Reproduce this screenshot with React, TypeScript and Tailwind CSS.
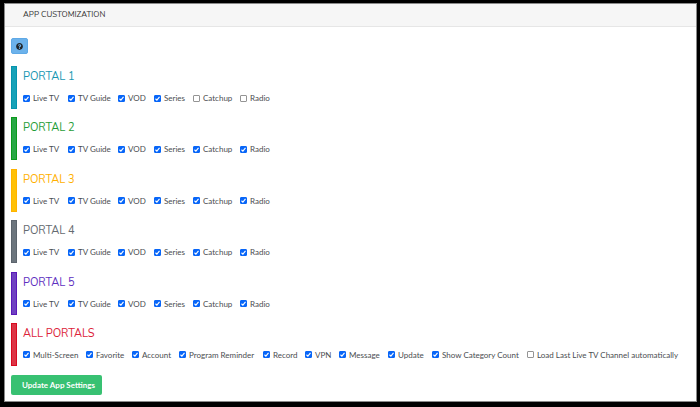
import React from "react";
import { FaQuestionCircle } from "react-icons/fa";

/* ============================= */
/* Type Definition */
/* ============================= */

type Portal = {
  name: string;
  text: string;
  bar: string;
  columns: string;
  options: string[];
  off?: string[];
};

/* ============================= */
/* Data */
/* ============================= */

const portalColumns = "grid-cols-[45px_50px_36px_39px_47px_auto]";
const portalOptions = [
  "Live TV",
  "TV Guide",
  "VOD",
  "Series",
  "Catchup",
  "Radio",
];

const portals: Portal[] = [
  {
    name: "PORTAL 1",
    text: "text-[#1797b2]",
    bar: "bg-[#17a2b8] border-[#0794ae]",
    columns: portalColumns,
    options: portalOptions,
    off: ["Catchup", "Radio"],
  },
  {
    name: "PORTAL 2",
    text: "text-[#1f9d37]",
    bar: "bg-[#28a745] border-[#0a9a1c]",
    columns: portalColumns,
    options: portalOptions,
  },
  {
    name: "PORTAL 3",
    text: "text-[#ffb000]",
    bar: "bg-[#ffc107] border-[#ffb300]",
    columns: portalColumns,
    options: portalOptions,
  },
  {
    name: "PORTAL 4",
    text: "text-[#646a70]",
    bar: "bg-[#6c757d] border-[#5c646d]",
    columns: portalColumns,
    options: portalOptions,
  },
  {
    name: "PORTAL 5",
    text: "text-[#5e2fc0]",
    bar: "bg-[#6f42c1] border-[#5a18b8]",
    columns: portalColumns,
    options: portalOptions,
  },
  {
    name: "ALL PORTALS",
    text: "text-[#dc2339]",
    bar: "bg-[#dc3545] border-[#d80a20]",
    columns: "grid-cols-[63px_46px_47px_84px_42px_34px_49px_44px_95px_auto]",
    options: [
      "Multi-Screen",
      "Favorite",
      "Account",
      "Program Reminder",
      "Record",
      "VPN",
      "Message",
      "Update",
      "Show Category Count",
      "Load Last Live TV Channel automatically",
    ],
    off: ["Load Last Live TV Channel automatically"],
  },
];

/* ============================= */
/* Option Checkbox */
/* ============================= */

const Option: React.FC<{ label: string; checked: boolean }> = ({
  label,
  checked,
}) => {
  return (
    <label className="flex items-center gap-[3px] text-[8px] leading-[12px] whitespace-nowrap">
      <span className="grid h-[7px] w-[7px] shrink-0">
        <input
          type="checkbox"
          defaultChecked={checked}
          className="peer col-start-1 row-start-1 h-[7px] w-[7px] appearance-none rounded-[1px] border border-[#949494] bg-white checked:border-[#0866f8] checked:bg-[#0866f8]"
        />
        {/* Tick mark */}
        <svg
          viewBox="0 0 14 14"
          className="pointer-events-none invisible col-start-1 row-start-1 h-[7px] w-[7px] peer-checked:visible"
        >
          <path
            d="M3 7.5 L5.8 10.3 L11 3.7"
            fill="none"
            stroke="white"
            strokeWidth="2.2"
          />
        </svg>
      </span>
      {label}
    </label>
  );
};

/* ============================= */
/* Portal Section */
/* ============================= */

const PortalSection: React.FC<{ portal: Portal }> = ({ portal }) => {
  return (
    <section className="flex">
      <div className={`w-[6px] shrink-0 border ${portal.bar}`} />
      <div className="pt-[3px] pb-[5px] pl-[6px]">
        <h2
          className={`font-['Nunito','Lato',sans-serif] text-[11px] leading-[15px] ${portal.text}`}
        >
          {portal.name}
        </h2>
        <div className={`mt-2 grid justify-start ${portal.columns}`}>
          {portal.options.map((option) => (
            <Option
              key={option}
              label={option}
              checked={!portal.off?.includes(option)}
            />
          ))}
        </div>
      </div>
    </section>
  );
};

/* ============================= */
/* Main Component */
/* ============================= */

const App: React.FC = () => {
  return (
    <div className="flex min-h-screen bg-black pt-[3px] pr-[3px] pb-[5px] pl-[4px] font-['Lato',sans-serif] text-[#4a4d50]">
      <main className="flex flex-1 flex-col border border-[#8a8a8a] bg-white">
        <header className="border-b border-[#e6e6e6] bg-[#f6f6f6] pl-[18px]">
          <h1 className="font-['Nunito','Lato',sans-serif] text-[8px] leading-[22px] text-[#333333]">
            APP CUSTOMIZATION
          </h1>
        </header>

        <div className="flex flex-1 flex-col items-start px-[6px] pt-[11px] pb-[6px]">
          <button
            type="button"
            aria-label="Help"
            className="flex h-[16px] w-[17px] items-center justify-center rounded-[2px] border border-[#5fa9e6] bg-[#6cb2eb] text-[#212529]"
          >
            <FaQuestionCircle className="h-[7px] w-[7px]" />
          </button>

          <div className="mt-[12px] mb-[9px] flex flex-1 flex-col justify-between">
            {portals.map((portal) => (
              <PortalSection key={portal.name} portal={portal} />
            ))}
          </div>

          <button
            type="submit"
            className="rounded-[2px] bg-[#38c172] pr-[7px] pl-[11px] text-[8px] leading-[20px] font-bold text-white"
          >
            Update App Settings
          </button>
        </div>
      </main>
    </div>
  );
};

export default App;
